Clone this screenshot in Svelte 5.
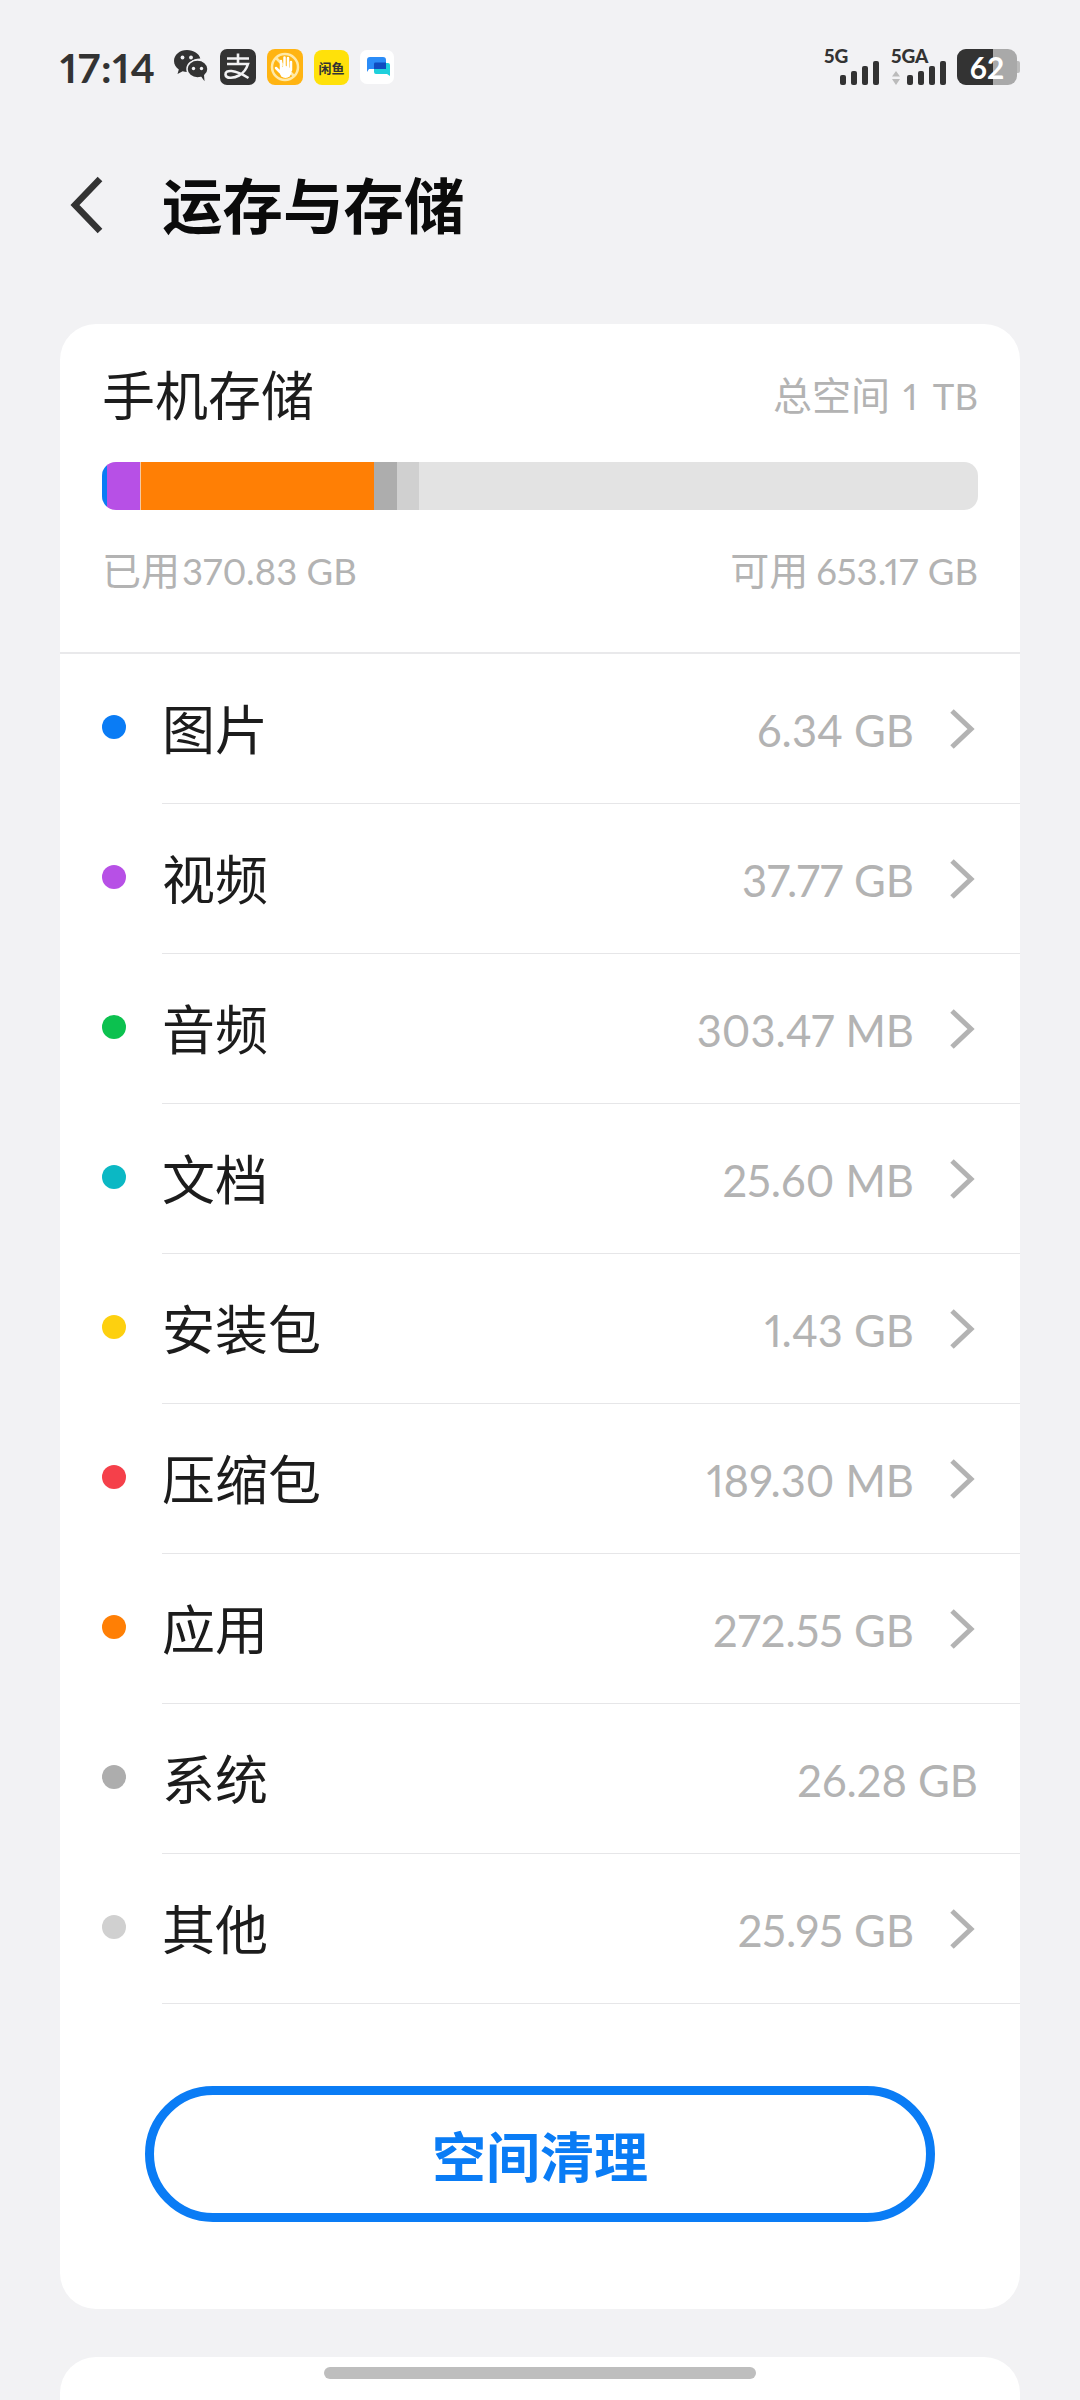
<script>
  const rows = [
    { name: '图片', size: '6.34 GB', color: '#0a7cf5', arrow: true },
    { name: '视频', size: '37.77 GB', color: '#b750e6', arrow: true },
    { name: '音频', size: '303.47 MB', color: '#0cc14f', arrow: true },
    { name: '文档', size: '25.60 MB', color: '#0bb8c4', arrow: true },
    { name: '安装包', size: '1.43 GB', color: '#fdd00f', arrow: true },
    { name: '压缩包', size: '189.30 MB', color: '#f5404a', arrow: true },
    { name: '应用', size: '272.55 GB', color: '#ff7f05', arrow: true },
    { name: '系统', size: '26.28 GB', color: '#adadad', arrow: false },
    { name: '其他', size: '25.95 GB', color: '#d0d0d0', arrow: true }
  ];

  // px widths of the used parts of the storage bar
  const segments = [
    { w: 5, color: '#0a7cf5' },
    { w: 33, color: '#b750e6' },
    { w: 1, color: '#f5c9a0' },
    { w: 233, color: '#ff7f05' },
    { w: 23, color: '#adadad' },
    { w: 22, color: '#d0d0d0' }
  ];
</script>

<div class="page">
  <div class="status">
    <span class="time">17:14</span>
    <div class="notifs">
      <svg width="36" height="36" viewBox="0 0 36 36">
        <path d="M14 1C6.800 1 1 5.900 1 12c0 3.400 1.900 6.400 4.800 8.500L4.500 25l5.200-2.700c1.300.4 2.800.6 4.300.6.400 0 .8 0 1.200-.1-.3-1-.5-2-.5-3 0-5.800 5.300-10.300 11.800-10.300h.8C26.200 4.600 20.600 1 14 1z" fill="#333"/>
        <path d="M35 20c0-5-4.800-9-10.500-9S14 15 14 20s4.800 9 10.500 9c1.200 0 2.400-.2 3.500-.5L32.500 35l-.7-8.600C33.800 24.800 35 22.500 35 20z" fill="#333" stroke="#f2f2f4" stroke-width="1.500"/>
        <circle cx="9.500" cy="8.500" r="1.900" fill="#f2f2f4"/><circle cx="18" cy="8.500" r="1.900" fill="#f2f2f4"/>
        <circle cx="20.500" cy="19.500" r="1.700" fill="#f2f2f4"/><circle cx="28.500" cy="19.500" r="1.700" fill="#f2f2f4"/>
      </svg>
      <svg width="36" height="36" viewBox="0 0 36 36">
        <rect width="36" height="36" rx="7" fill="#333"/>
        <path d="M7 9.500h22M18 4.500v10M7 15h21c-1.500 5-4.500 9-9 11.500-4 2.300-13 4-13.500-1-.4-5 9-5.500 23 3.500" fill="none" stroke="#f2f2f4" stroke-width="2.600"/>
      </svg>
      <svg width="36" height="36" viewBox="0 0 36 36">
        <rect width="36" height="36" rx="8" fill="#ffb412"/>
        <circle cx="18" cy="18" r="13" fill="none" stroke="#ffe9a8" stroke-width="2.500"/>
        <path d="M9 9l18 18" stroke="#ffe9a8" stroke-width="2.500"/>
        <path d="M14 21v-9M17.500 20V8.500M21 20V9M24 21v-8M13 23l-4-4" fill="none" stroke="#fff" stroke-width="2.500" stroke-linecap="round"/>
        <circle cx="18.500" cy="23" r="6" fill="#fff"/>
      </svg>
      <div class="xianyu"><span>闲鱼</span></div>
      <svg width="34" height="34" viewBox="0 0 34 34">
        <rect width="34" height="34" rx="7" fill="#fff"/>
        <path d="M7 10q0-3 3-3h13q3 0 3 3v9H9l-2 3z" fill="#2b8cf7"/>
        <path d="M14 15q0-2 2-2h12q2 0 2 2v11l-3-2H16q-2 0-2-2z" fill="#1fd0dc"/>
        <path d="M14 13.500q0-1 1.500-1H26V19H14z" fill="#0f4bc0"/>
      </svg>
    </div>
    <div class="status-right">
      <div class="signal first">
        <span class="net">5G</span>
        <div class="bars"><i></i><i></i><i></i><i></i></div>
      </div>
      <div class="signal">
        <span class="net">5GA</span>
        <div class="signal-row">
          <svg width="10" height="14" viewBox="0 0 10 14"><path d="M5 0l4 5.500H1zM5 14l4-6H1z" fill="#bbb"/></svg>
          <div class="bars"><i></i><i></i><i></i><i></i></div>
        </div>
      </div>
      <div class="battery-wrap">
        <div class="battery"><div class="battery-fill"></div><span>62</span></div>
        <div class="battery-cap"></div>
      </div>
    </div>
  </div>

  <header class="top">
    <svg class="back" width="34" height="60" viewBox="0 0 34 60">
      <path d="M30 4L5 30l25 26" fill="none" stroke="#333" stroke-width="6.500"/>
    </svg>
    <h1>运存与存储</h1>
  </header>

  <section class="card">
    <div class="summary">
      <div class="summary-head">
        <span class="phone">手机存储</span>
        <span class="muted total"><b>总空间</b>1 TB</span>
      </div>
      <div class="bar">
        {#each segments as s}
          <div style="width: {s.w}px; background: {s.color}"></div>
        {/each}
      </div>
      <div class="summary-foot">
        <span class="muted"><b>已用</b>370.83 GB</span>
        <span class="muted avail"><b>可用</b>653.17 GB</span>
      </div>
    </div>

    <div class="list">
      {#each rows as row}
        <div class="row">
          <span class="dot" style="background: {row.color}"></span>
          <div class="row-body">
            <span class="name">{row.name}</span>
            <span class="size">{row.size}</span>
            {#if row.arrow}
              <svg class="arrow" width="26" height="42" viewBox="0 0 26 42">
                <path d="M3 3l19 18L3 39" fill="none" stroke="#b3b3b3" stroke-width="5"/>
              </svg>
            {/if}
          </div>
        </div>
      {/each}
    </div>

    <div class="action">
      <button class="clean">空间清理</button>
    </div>
  </section>

  <section class="card next"></section>

  <div class="home-bar"></div>
</div>

<style>
  :global(body) {
    margin: 0;
    background: #f2f2f4;
  }

  .page {
    position: relative;
    height: 2400px;
    overflow: hidden;
    background: #f2f2f4;
    font-family: Lato, "Noto Sans CJK SC", sans-serif;
    font-variant-numeric: proportional-nums;
    color: #1c1c1c;
  }

  .status {
    height: 134px;
    padding: 0 60px;
    box-sizing: border-box;
    display: flex;
    align-items: center;
  }

  .time {
    font-size: 41px;
    font-weight: 700;
    letter-spacing: 1px;
    color: #333;
    width: 113px;
  }

  .notifs {
    display: flex;
    align-items: center;
    gap: 11px;
  }

  .xianyu {
    width: 35px;
    height: 35px;
    border-radius: 8px;
    background: #ffe10a;
    display: flex;
    align-items: center;
    justify-content: center;
  }

  .xianyu span {
    font-size: 13px;
    font-weight: 700;
    color: #333;
    white-space: nowrap;
  }

  .status-right {
    margin-left: auto;
    display: flex;
    align-items: flex-end;
    gap: 11px;
    height: 36px;
  }

  .signal {
    display: flex;
    flex-direction: column;
    width: 55px;
    height: 36px;
    justify-content: flex-end;
  }

  .signal.first {
    margin-right: 1px;
  }

  .net {
    font-size: 19px;
    line-height: 16px;
    font-weight: 900;
    color: #333;
    margin-bottom: -3px;
  }

  .signal-row {
    display: flex;
    align-items: flex-end;
    justify-content: space-between;
  }

  .bars {
    display: flex;
    align-items: flex-end;
    justify-content: flex-end;
    gap: 4.500px;
  }

  .bars i {
    width: 6.500px;
    border-radius: 2px;
    background: #333;
  }

  .bars i:nth-child(1) { height: 10px; }
  .bars i:nth-child(2) { height: 14px; }
  .bars i:nth-child(3) { height: 19px; }
  .bars i:nth-child(4) { height: 24px; }

  .battery-wrap {
    display: flex;
    align-items: center;
  }

  .battery {
    position: relative;
    width: 60px;
    height: 36px;
    border-radius: 9px;
    overflow: hidden;
    background: #a9a9a9;
    display: flex;
    align-items: center;
    justify-content: center;
  }

  .battery-fill {
    position: absolute;
    left: 0;
    top: 0;
    bottom: 0;
    width: 36px;
    background: #333;
  }

  .battery span {
    position: relative;
    font-size: 30px;
    font-weight: 700;
    color: #fff;
  }

  .battery-cap {
    width: 3px;
    height: 12px;
    border-radius: 0 2px 2px 0;
    background: #bbb;
  }

  .top {
    height: 140px;
    padding-left: 70px;
    display: flex;
    align-items: center;
    margin-bottom: 50px;
  }

  .back {
    margin: 2px 58px 0 0;
  }

  h1 {
    margin: 0 0 4px;
    font-size: 60.500px;
    font-weight: 700;
    color: #0b0b0b;
  }

  .card {
    margin: 0 60px;
    height: 1985px;
    border-radius: 36px;
    background: #fff;
  }

  .card.next {
    margin-top: 48px;
    height: 300px;
  }

  .summary {
    height: 330px;
    padding: 0 42px;
    box-sizing: border-box;
    border-bottom: 2px solid #e9e9eb;
    display: flex;
    flex-direction: column;
  }

  .summary-head {
    height: 138px;
    padding-top: 4px;
    box-sizing: border-box;
    display: flex;
    justify-content: space-between;
    align-items: center;
  }

  .phone {
    font-size: 53px;
    line-height: 1;
  }

  .muted {
    font-size: 36.500px;
    color: #b3b3b3;
  }

  .muted b {
    font-size: 39px;
    font-weight: 400;
    margin-right: 2px;
  }

  .muted.total {
    margin-bottom: 4px;
    word-spacing: 6px;
  }

  .muted.total b {
    margin-right: 13px;
  }

  .muted.avail b {
    margin-right: 8px;
  }

  .bar {
    height: 48px;
    display: flex;
    overflow: hidden;
    border-radius: 14px;
    background: #e3e3e3;
    flex: none;
  }

  .summary-foot {
    display: flex;
    justify-content: space-between;
    margin-top: 30px;
  }

  .row {
    height: 150px;
    display: flex;
  }

  .dot {
    width: 24px;
    height: 24px;
    margin: 61px 0 0 42px;
    border-radius: 50%;
    flex: none;
  }

  .row-body {
    flex: 1;
    margin-left: 36px;
    padding: 1px 42px 0 0;
    display: flex;
    align-items: center;
    border-bottom: 1px solid #e6e6e8;
  }

  .name {
    font-size: 53px;
    flex: 1;
    padding-bottom: 4px;
  }

  .size {
    font-size: 43.500px;
    color: #b3b3b3;
    padding-top: 2px;
  }

  .arrow {
    margin: 0 3px 0 35px;
  }

  .action {
    padding: 82px 85px 0;
  }

  .clean {
    display: block;
    width: 100%;
    height: 136px;
    border: 9px solid #0a7cf5;
    border-radius: 68px;
    background: #fff;
    color: #0a7cf5;
    font: inherit;
    font-size: 54px;
    font-weight: 700;
  }

  .home-bar {
    position: absolute;
    left: 324px;
    top: 2367px;
    width: 432px;
    height: 12px;
    border-radius: 6px;
    background: #bebebe;
  }
</style>
